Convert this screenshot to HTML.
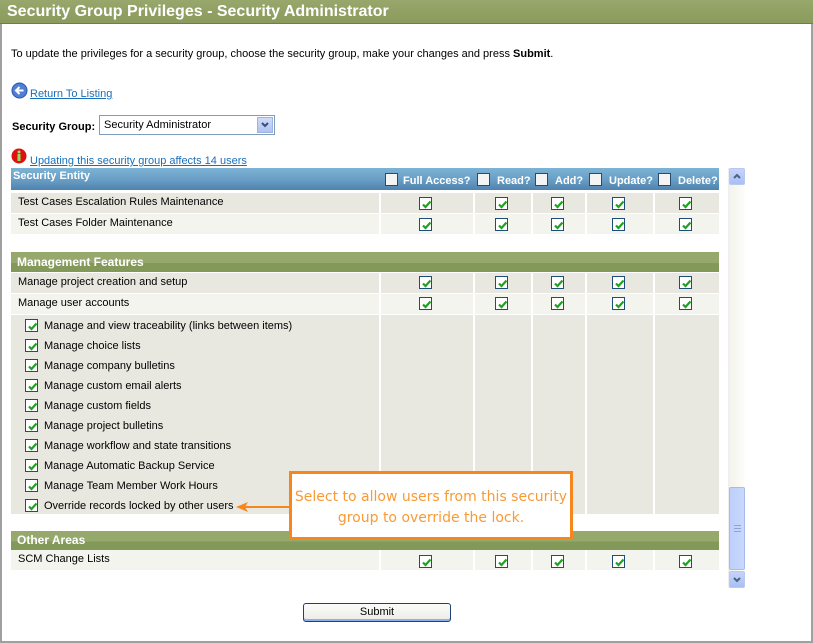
<!DOCTYPE html>
<html><head><meta charset="utf-8"><style>
*{margin:0;padding:0;box-sizing:border-box}
body{width:813px;height:643px;background:#fff;font-family:"Liberation Sans",Arial,sans-serif;font-size:11px;color:#000;position:relative;overflow:hidden}
.a{position:absolute}
.frame{left:0;top:0;width:813px;height:643px;border-left:2px solid #a0a0a0;border-right:2px solid #a0a0a0;border-bottom:2px solid #a0a0a0}
.title{left:0;top:0;width:813px;height:24px;background:linear-gradient(#98a76c,#8a9b5c);color:#fff;font-weight:bold;font-size:16px;line-height:24px;padding-left:7px;border-bottom:1px solid #6e8045}
a{color:#1a6fb8;text-decoration:underline}
.cb{position:absolute;width:13px;height:13px;border:1px solid #1e4d7a;background:#fff}
.cb svg{position:absolute;left:1px;top:1px}
.ecb{position:absolute;width:13px;height:13px;border:1px solid #2a4a6a;background:#f4f4f4}
.row{position:absolute;left:11px;width:708px;height:20px}
.row .t{position:absolute;left:7px;top:3px}
.gh{position:absolute;left:11px;width:708px;background:linear-gradient(#97a86c 0,#97a86c 55%,#83995a 55%,#83995a 100%);color:#fff;font-weight:bold;font-size:12px;padding-left:6px}
.item{position:absolute;left:44px;font-size:11px}
</style></head><body>
<div class="a frame"></div>
<div class="a title">Security Group Privileges - Security Administrator</div>
<div class="a" style="left:11px;top:48px">To update the privileges for a security group, choose the security group, make your changes and press <b>Submit</b>.</div>
<svg class="a" style="left:11px;top:82px" width="17" height="17" viewBox="0 0 17 17"><circle cx="8.5" cy="8.5" r="7.5" fill="#4f7fd6" stroke="#2b55a8"/><path d="M12.5 8.5H5.5M8.5 5L5 8.5 8.5 12" stroke="#fff" stroke-width="2" fill="none"/></svg>
<a class="a" style="left:30px;top:88px">Return To Listing</a>
<div class="a" style="left:12px;top:121px;font-weight:bold">Security Group:</div>
<div class="a" style="left:99px;top:115px;width:176px;height:20px;border:1px solid #7f9db9;background:#fff;padding:3px 0 0 4px">Security Administrator
<div class="a" style="right:1px;top:1px;width:16px;height:16px;background:linear-gradient(#cfdcf8,#aec3f0);border:1px solid #9fb3e3"><svg width="14" height="14"><path d="M4 5l3 3 3-3" stroke="#3a4d7a" stroke-width="2" fill="none"/></svg></div></div>
<svg class="a" style="left:11px;top:148px" width="16" height="16"><circle cx="8" cy="8" r="7.5" fill="#e01010"/><rect x="6.5" y="6" width="3" height="7" fill="#8fe060"/><circle cx="8" cy="4" r="1.5" fill="#8fe060"/></svg>
<a class="a" style="left:30px;top:155px">Updating this security group affects 14 users</a>

<div class="a" style="left:11px;top:168px;width:708px;height:22px;background:linear-gradient(#7db3d4,#6aa0c6 50%,#4f82ae);color:#fff;font-weight:bold">
<span class="a" style="left:2px;top:2px">Security Entity</span>
<div class="ecb" style="left:374px;top:5px"></div><span class="a" style="left:392px;top:7px">Full Access?</span>
<div class="ecb" style="left:466px;top:5px"></div><span class="a" style="left:486px;top:7px">Read?</span>
<div class="ecb" style="left:524px;top:5px"></div><span class="a" style="left:544px;top:7px">Add?</span>
<div class="ecb" style="left:578px;top:5px"></div><span class="a" style="left:598px;top:7px">Update?</span>
<div class="ecb" style="left:647px;top:5px"></div><span class="a" style="left:667px;top:7px">Delete?</span>
</div>
<div class="a" style="left:11px;top:190px;width:708px;height:3px;background:#fff"></div>

<div class="row" style="top:193px;background:#e9e8e0"><span class="t">Test Cases Escalation Rules Maintenance</span></div>
<div class="row" style="top:214px;background:#f4f4ee"><span class="t">Test Cases Folder Maintenance</span></div>
<div class="gh" style="top:252px;height:20px;line-height:20px">Management Features</div>
<div class="row" style="top:273px;background:#e9e8e0"><span class="t">Manage project creation and setup</span></div>
<div class="row" style="top:294px;background:#f4f4ee"><span class="t">Manage user accounts</span></div>
<div class="row" style="top:315px;height:199px;background:#e9e8e0"></div>
<div class="gh" style="top:531px;height:19px;line-height:19px">Other Areas</div>
<div class="row" style="top:550px;background:#f4f4ee"><span class="t">SCM Change Lists</span></div>

<div class="a" style="left:379px;top:193px;width:2px;height:42px;background:#fff"></div>
<div class="a" style="left:473px;top:193px;width:2px;height:42px;background:#fff"></div>
<div class="a" style="left:531px;top:193px;width:2px;height:42px;background:#fff"></div>
<div class="a" style="left:585px;top:193px;width:2px;height:42px;background:#fff"></div>
<div class="a" style="left:653px;top:193px;width:2px;height:42px;background:#fff"></div>
<div class="a" style="left:379px;top:273px;width:2px;height:241px;background:#fff"></div>
<div class="a" style="left:473px;top:273px;width:2px;height:241px;background:#fff"></div>
<div class="a" style="left:531px;top:273px;width:2px;height:241px;background:#fff"></div>
<div class="a" style="left:585px;top:273px;width:2px;height:241px;background:#fff"></div>
<div class="a" style="left:653px;top:273px;width:2px;height:241px;background:#fff"></div>
<div class="a" style="left:11px;top:293px;width:708px;height:1px;background:#fff"></div>
<div class="a" style="left:11px;top:314px;width:708px;height:1px;background:#fff"></div>
<div class="a" style="left:379px;top:550px;width:2px;height:20px;background:#fff"></div>
<div class="a" style="left:473px;top:550px;width:2px;height:20px;background:#fff"></div>
<div class="a" style="left:531px;top:550px;width:2px;height:20px;background:#fff"></div>
<div class="a" style="left:585px;top:550px;width:2px;height:20px;background:#fff"></div>
<div class="a" style="left:653px;top:550px;width:2px;height:20px;background:#fff"></div>

<svg width="0" height="0" style="position:absolute"><defs><symbol id="ck" viewBox="0 0 11 11"><path d="M2 5.5l2.5 2.5 5-5.5" stroke="#21a121" stroke-width="2.2" fill="none"/></symbol></defs></svg>

<div class="cb" style="left:419px;top:197px"><svg width="11" height="11"><use href="#ck"/></svg></div>
<div class="cb" style="left:495px;top:197px"><svg width="11" height="11"><use href="#ck"/></svg></div>
<div class="cb" style="left:551px;top:197px"><svg width="11" height="11"><use href="#ck"/></svg></div>
<div class="cb" style="left:612px;top:197px"><svg width="11" height="11"><use href="#ck"/></svg></div>
<div class="cb" style="left:679px;top:197px"><svg width="11" height="11"><use href="#ck"/></svg></div>
<div class="cb" style="left:419px;top:218px"><svg width="11" height="11"><use href="#ck"/></svg></div>
<div class="cb" style="left:495px;top:218px"><svg width="11" height="11"><use href="#ck"/></svg></div>
<div class="cb" style="left:551px;top:218px"><svg width="11" height="11"><use href="#ck"/></svg></div>
<div class="cb" style="left:612px;top:218px"><svg width="11" height="11"><use href="#ck"/></svg></div>
<div class="cb" style="left:679px;top:218px"><svg width="11" height="11"><use href="#ck"/></svg></div>
<div class="cb" style="left:419px;top:276px"><svg width="11" height="11"><use href="#ck"/></svg></div>
<div class="cb" style="left:495px;top:276px"><svg width="11" height="11"><use href="#ck"/></svg></div>
<div class="cb" style="left:551px;top:276px"><svg width="11" height="11"><use href="#ck"/></svg></div>
<div class="cb" style="left:612px;top:276px"><svg width="11" height="11"><use href="#ck"/></svg></div>
<div class="cb" style="left:679px;top:276px"><svg width="11" height="11"><use href="#ck"/></svg></div>
<div class="cb" style="left:419px;top:297px"><svg width="11" height="11"><use href="#ck"/></svg></div>
<div class="cb" style="left:495px;top:297px"><svg width="11" height="11"><use href="#ck"/></svg></div>
<div class="cb" style="left:551px;top:297px"><svg width="11" height="11"><use href="#ck"/></svg></div>
<div class="cb" style="left:612px;top:297px"><svg width="11" height="11"><use href="#ck"/></svg></div>
<div class="cb" style="left:679px;top:297px"><svg width="11" height="11"><use href="#ck"/></svg></div>
<div class="cb" style="left:419px;top:555px"><svg width="11" height="11"><use href="#ck"/></svg></div>
<div class="cb" style="left:495px;top:555px"><svg width="11" height="11"><use href="#ck"/></svg></div>
<div class="cb" style="left:551px;top:555px"><svg width="11" height="11"><use href="#ck"/></svg></div>
<div class="cb" style="left:612px;top:555px"><svg width="11" height="11"><use href="#ck"/></svg></div>
<div class="cb" style="left:679px;top:555px"><svg width="11" height="11"><use href="#ck"/></svg></div>

<div class="cb" style="left:25px;top:319px"><svg width="11" height="11"><use href="#ck"/></svg></div><div class="item" style="top:320px">Manage and view traceability (links between items)</div>
<div class="cb" style="left:25px;top:339px"><svg width="11" height="11"><use href="#ck"/></svg></div><div class="item" style="top:340px">Manage choice lists</div>
<div class="cb" style="left:25px;top:359px"><svg width="11" height="11"><use href="#ck"/></svg></div><div class="item" style="top:360px">Manage company bulletins</div>
<div class="cb" style="left:25px;top:379px"><svg width="11" height="11"><use href="#ck"/></svg></div><div class="item" style="top:380px">Manage custom email alerts</div>
<div class="cb" style="left:25px;top:399px"><svg width="11" height="11"><use href="#ck"/></svg></div><div class="item" style="top:400px">Manage custom fields</div>
<div class="cb" style="left:25px;top:419px"><svg width="11" height="11"><use href="#ck"/></svg></div><div class="item" style="top:420px">Manage project bulletins</div>
<div class="cb" style="left:25px;top:439px"><svg width="11" height="11"><use href="#ck"/></svg></div><div class="item" style="top:440px">Manage workflow and state transitions</div>
<div class="cb" style="left:25px;top:459px"><svg width="11" height="11"><use href="#ck"/></svg></div><div class="item" style="top:460px">Manage Automatic Backup Service</div>
<div class="cb" style="left:25px;top:479px"><svg width="11" height="11"><use href="#ck"/></svg></div><div class="item" style="top:480px">Manage Team Member Work Hours</div>
<div class="cb" style="left:25px;top:499px"><svg width="11" height="11"><use href="#ck"/></svg></div><div class="item" style="top:500px">Override records locked by other users</div>

<div class="a" style="left:728px;top:168px;width:17px;height:420px;background:linear-gradient(90deg,#f3f2ec,#fdfdfa);border-left:1px solid #eee"></div>
<div class="a" style="left:729px;top:168px;width:16px;height:17px;background:linear-gradient(#c6d4fb,#a9bff5);border:1px solid #b8c8ee;border-radius:2px"><svg width="14" height="15"><path d="M4 9l3-3 3 3" stroke="#4d6185" stroke-width="2" fill="none"/></svg></div>
<div class="a" style="left:729px;top:487px;width:16px;height:83px;background:linear-gradient(90deg,#bdd0fb,#c9d8fc);border:1px solid #a7bbea;border-radius:2px"><div class="a" style="left:4px;top:37px;width:7px;height:7px;border-top:1px solid #8ea3d6;border-bottom:1px solid #8ea3d6"><div style="margin-top:2px;height:1px;background:#8ea3d6"></div></div></div>
<div class="a" style="left:729px;top:571px;width:16px;height:17px;background:linear-gradient(#c6d4fb,#a9bff5);border:1px solid #b8c8ee;border-radius:2px"><svg width="14" height="15"><path d="M4 6l3 3 3-3" stroke="#4d6185" stroke-width="2" fill="none"/></svg></div>

<div class="a" style="left:240px;top:506px;width:50px;height:2px;background:#f7861c"></div>
<svg class="a" style="left:236px;top:501px" width="14" height="12"><path d="M0 6L12 1 9 6 12 11z" fill="#f7861c"/></svg>
<div class="a" style="left:289px;top:471px;width:284px;height:69px;border:3px solid #f7861c;background:#fff;color:#f89a35;font-family:'DejaVu Sans','Liberation Sans',sans-serif;font-size:14px;text-align:center;line-height:21px;padding-top:13px">Select to allow users from this security<br>group to override the lock.</div>

<div class="a" style="left:303px;top:603px;width:148px;height:19px;border:1px solid #1e3f7a;border-radius:3px;background:linear-gradient(#fbfbf9,#ecebe5);box-shadow:inset 0 -2px 0 #8fb0ef;text-align:center;line-height:17px">Submit</div>
</body></html>
